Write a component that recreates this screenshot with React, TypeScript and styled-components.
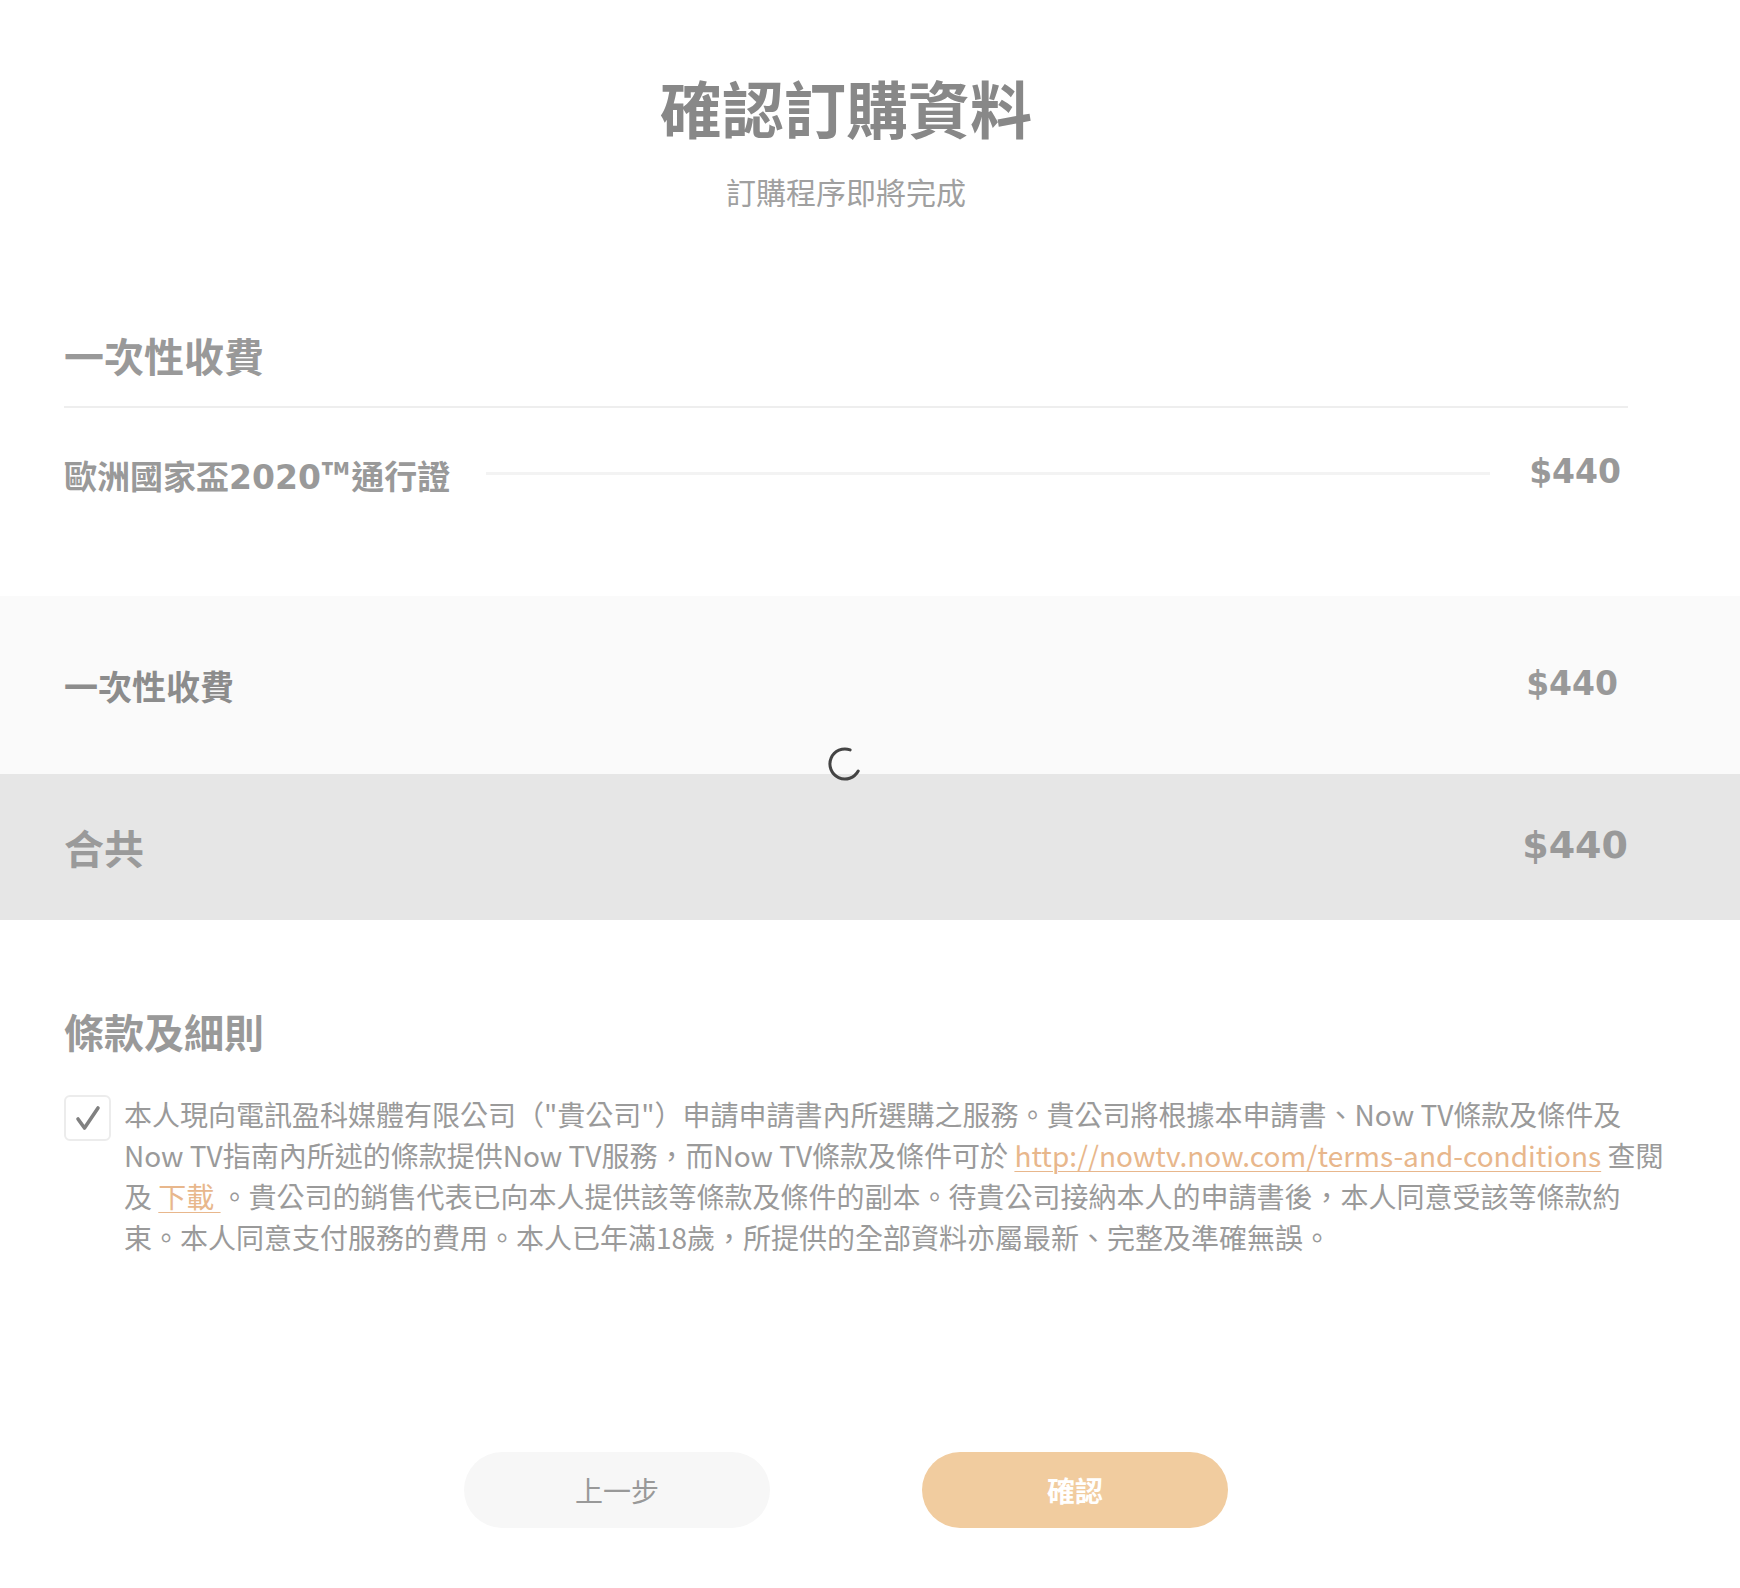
import React, { useState } from 'react';
import styled, { createGlobalStyle, keyframes } from 'styled-components';

const GlobalStyle = createGlobalStyle`
  html, body {
    margin: 0;
    padding: 0;
    background: #fff;
  }
  body {
    font-family: "Noto Sans CJK TC", "Noto Sans", sans-serif;
    color: #999;
  }
`;

const cjk = `"Noto Sans CJK TC", "Noto Sans", sans-serif`;
const num = `"DejaVu Sans", "Noto Sans CJK TC", sans-serif`;

const Page = styled.div`
  width: 1740px;
  min-height: 1588px;
  display: flex;
  flex-direction: column;
`;

const Header = styled.header`
  padding: 70px 112px 0 64px;
  display: flex;
  flex-direction: column;
  align-items: center;
`;

const Title = styled.h1`
  margin: 0;
  font-family: ${cjk};
  font-size: 62px;
  line-height: 74px;
  font-weight: 700;
  color: #888;
`;

const Subtitle = styled.p`
  margin: 27px 0 0;
  font-family: ${cjk};
  font-size: 30px;
  line-height: 40px;
  color: #a0a0a0;
`;

const Section = styled.section`
  padding: 120px 112px 0 64px;
`;

const SectionTitle = styled.h2`
  margin: 0;
  font-family: ${cjk};
  font-size: 40px;
  line-height: 48px;
  font-weight: 700;
  color: #999;
`;

const Divider = styled.hr`
  margin: 27px 0 0;
  border: none;
  height: 2px;
  background: #eeeeee;
`;

const ItemRow = styled.div`
  margin-top: 45px;
  display: flex;
  align-items: center;
  height: 40px;
`;

const ItemName = styled.span`
  font-family: ${num};
  font-size: 33px;
  font-weight: 700;
  color: #999;
  white-space: nowrap;
`;

const Trademark = styled.span`
  font-family: ${cjk};
  font-size: 36px;
  margin: 0 2px 0 1px;
`;

const Leader = styled.span`
  flex: 1;
  height: 3px;
  margin: 0 39px 0 36px;
  background: #f3f3f3;
`;

const Price = styled.span<{ $size: number; $right?: number }>`
  font-family: ${num};
  font-size: ${(p) => p.$size}px;
  font-weight: 700;
  color: #999;
  margin-right: ${(p) => p.$right ?? 0}px;
  margin-top: -4px;
`;

const Summary = styled.div`
  margin-top: 103px;
  position: relative;
`;

const Band = styled.div<{ $bg: string; $h: number }>`
  height: ${(p) => p.$h}px;
  background: ${(p) => p.$bg};
  padding: 0 112px 0 64px;
  display: flex;
  align-items: center;
  justify-content: space-between;
`;

const BandLabel = styled.span<{ $size: number; $color: string }>`
  font-family: ${cjk};
  font-size: ${(p) => p.$size}px;
  font-weight: 700;
  color: ${(p) => p.$color};
`;

const spin = keyframes`
  from { transform: rotate(0deg); }
  to { transform: rotate(360deg); }
`;

const Spinner = styled.svg`
  position: absolute;
  left: 826px;
  top: 149px;
  width: 38px;
  height: 38px;
  animation: ${spin} 1s linear infinite;
  animation-play-state: paused;
`;

const Terms = styled.section`
  padding: 87px 70px 0 64px;
`;

const TermsBody = styled.div`
  margin-top: 39px;
  display: flex;
  align-items: flex-start;
  gap: 13px;
`;

const CheckBox = styled.button<{ $on: boolean }>`
  flex: none;
  width: 47px;
  height: 46px;
  margin-top: 1px;
  padding: 0;
  border: 2px solid #ececec;
  border-radius: 6px;
  background: #fff;
  display: flex;
  align-items: center;
  justify-content: center;
  cursor: pointer;
  svg {
    opacity: ${(p) => (p.$on ? 1 : 0)};
  }
`;

const TermsText = styled.p`
  margin: 0;
  font-family: ${cjk};
  font-size: 28px;
  line-height: 41px;
  color: #9a9a9a;
`;

const Link = styled.a`
  color: #e8b78c;
  text-decoration: underline;
  text-underline-offset: 4px;
  text-decoration-thickness: 1px;
`;

const Actions = styled.div`
  margin-top: 194px;
  padding: 0 112px 61px 64px;
  display: flex;
  justify-content: center;
  gap: 152px;
`;

const Button = styled.button<{ $primary?: boolean }>`
  width: 306px;
  height: 76px;
  border: none;
  border-radius: 38px;
  font-family: ${cjk};
  font-size: 28px;
  font-weight: ${(p) => (p.$primary ? 700 : 400)};
  color: ${(p) => (p.$primary ? '#fff' : '#999')};
  background: ${(p) => (p.$primary ? '#f1cc9f' : '#f7f7f7')};
  cursor: pointer;
`;

const App: React.FC = () => {
  const [agreed, setAgreed] = useState(true);

  return (
    <Page>
      <GlobalStyle />
      <Header>
        <Title>確認訂購資料</Title>
        <Subtitle>訂購程序即將完成</Subtitle>
      </Header>

      <Section>
        <SectionTitle>一次性收費</SectionTitle>
        <Divider />
        <ItemRow>
          <ItemName>
            歐洲國家盃2020<Trademark>™</Trademark>通行證
          </ItemName>
          <Leader />
          <Price $size={33} $right={7}>$440</Price>
        </ItemRow>
      </Section>

      <Summary>
        <Band $bg="#fafafa" $h={178}>
          <BandLabel $size={34} $color="#8c8c8c">一次性收費</BandLabel>
          <Price $size={33} $right={10}>$440</Price>
        </Band>
        <Band $bg="#e6e6e6" $h={146}>
          <BandLabel $size={40} $color="#9a9a9a">合共</BandLabel>
          <Price $size={38}>$440</Price>
        </Band>
        <Spinner viewBox="0 0 38 38">
          <path
            d="M 24.1 4.9 A 15 15 0 1 0 32.2 26.0"
            fill="none"
            stroke="#444"
            strokeWidth="3"
            strokeLinecap="round"
          />
        </Spinner>
      </Summary>

      <Terms>
        <SectionTitle>條款及細則</SectionTitle>
        <TermsBody>
          <CheckBox $on={agreed} onClick={() => setAgreed(!agreed)} aria-label="agree">
            <svg width="28" height="28" viewBox="0 0 28 28">
              <path
                d="M 4 15 L 10.5 24 L 24 4"
                fill="none"
                stroke="#808080"
                strokeWidth="3.6"
                strokeLinecap="round"
                strokeLinejoin="round"
              />
            </svg>
          </CheckBox>
          <TermsText>
            本人現向電訊盈科媒體有限公司（"貴公司"）申請申請書內所選購之服務。貴公司將根據本申請書、Now TV條款及條件及Now TV指南內所述的條款提供Now TV服務，而Now TV條款及條件可於{' '}
            <Link href="#">http://nowtv.now.com/terms-and-conditions</Link> 查閱及{' '}
            <Link href="#">下載 </Link>
            。貴公司的銷售代表已向本人提供該等條款及條件的副本。待貴公司接納本人的申請書後，本人同意受該等條款約束。本人同意支付服務的費用。本人已年滿18歲，所提供的全部資料亦屬最新、完整及準確無誤。
          </TermsText>
        </TermsBody>
      </Terms>

      <Actions>
        <Button>上一步</Button>
        <Button $primary>確認</Button>
      </Actions>
    </Page>
  );
};

export default App;
